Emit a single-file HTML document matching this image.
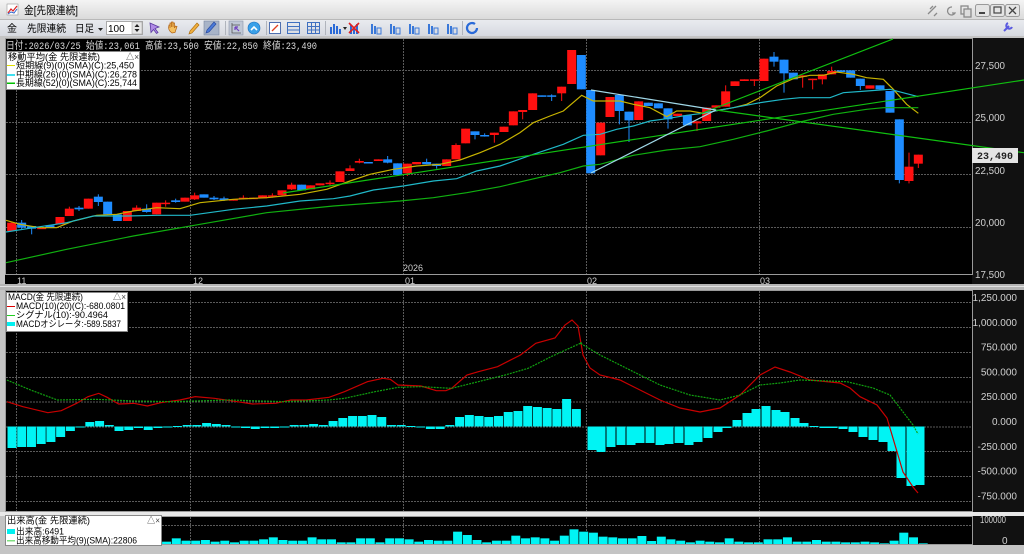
<!DOCTYPE html>
<html><head><meta charset="utf-8">
<style>
html,body{margin:0;padding:0;width:1024px;height:554px;overflow:hidden;background:#c8c8c8}
svg{display:block}
text{font-family:"Liberation Sans","Noto Sans CJK JP",sans-serif}
.m{font-family:"Liberation Mono","Noto Sans CJK JP",monospace}
</style></head><body>
<svg id="s" width="1024" height="554" xmlns="http://www.w3.org/2000/svg">
<defs>
<linearGradient id="tg" x1="0" y1="0" x2="0" y2="1"><stop offset="0" stop-color="#f4f4f4"/><stop offset="1" stop-color="#d9d9d9"/></linearGradient>
<linearGradient id="bg2" x1="0" y1="0" x2="0" y2="1"><stop offset="0" stop-color="#e9ebef"/><stop offset="1" stop-color="#d6d9e0"/></linearGradient>
</defs>
<!-- title bar -->
<rect x="0" y="0" width="1024" height="20" fill="url(#tg)"/>
<rect x="0" y="19" width="1024" height="1" fill="#b8b8b8"/>
<rect x="7" y="4" width="11" height="11" fill="#fff" stroke="#999" stroke-width="0.6"/>
<polyline points="8,13 11,9 13,11 17,6" fill="none" stroke="#d22" stroke-width="1.2"/>
<polyline points="8,14 11,12 14,13 17,9" fill="none" stroke="#36c" stroke-width="1"/>
<text x="24" y="14" font-size="11" fill="#000" textLength="54" lengthAdjust="spacingAndGlyphs">金[先限連続]</text>
<g fill="none" stroke="#8a8a8a" stroke-width="1.3">
<path d="M928,14 l8,-8 M930,9 l3,-3 M934,16 l3,-3"/>
<path d="M952,7 a4,4 0 1 0 3,6 h-3"/>
<rect x="961" y="6" width="7" height="8"/><rect x="964" y="9" width="7" height="8" fill="#ddd"/>
</g>
<g fill="#e4e4e4" stroke="#9a9a9a" stroke-width="1">
<rect x="975.5" y="4.5" width="14" height="12" rx="2"/><rect x="990.5" y="4.5" width="14" height="12" rx="2"/><rect x="1005.5" y="4.5" width="14" height="12" rx="2"/>
</g>
<rect x="979" y="12" width="6" height="2" fill="#444"/>
<rect x="994" y="7" width="7" height="6" fill="none" stroke="#444" stroke-width="1.2"/>
<path d="M1009,7 l7,7 M1016,7 l-7,7" stroke="#444" stroke-width="1.3"/>
<!-- toolbar -->
<rect x="0" y="20" width="1024" height="16" fill="url(#bg2)"/>
<text x="7" y="32" font-size="10" textLength="10" lengthAdjust="spacingAndGlyphs">金</text>
<text x="27" y="32" font-size="10" textLength="39" lengthAdjust="spacingAndGlyphs">先限連続</text>
<text x="75" y="32" font-size="10" textLength="19" lengthAdjust="spacingAndGlyphs">日足</text>
<path d="M98,28 h5 l-2.5,3z" fill="#222"/>
<rect x="106.5" y="21.5" width="36" height="13" fill="#fff" stroke="#aaa"/>
<text x="108" y="32" font-size="10" fill="#000">100</text>
<rect x="132" y="22" width="10" height="12" fill="#e6e6e6" stroke="#999" stroke-width=".5"/>
<path d="M134.5,27 h5 l-2.5,-3z M134.5,29 h5 l-2.5,3z" fill="#222"/>
<!-- tool icons -->
<path d="M150,23 l9,4 -4,1.5 3,4 -1.5,1 -3,-4 -2.5,3z" fill="#b08be6" stroke="#5a3aa0" stroke-width=".8"/>
<path d="M172,33 c-3,-2 -4,-5 -3,-8 l1,0 0,3 0,-5 1.5,0 0,4 0,-5 1.5,0 0,5 0,-4 1.5,0 0,5 1,-2 1.5,0.5 -2,6z" fill="#f4c060" stroke="#b06010" stroke-width=".7"/>
<path d="M189,34 l1,-3 7,-8 2,2 -7,8z" fill="#f0b040" stroke="#b07010" stroke-width=".7"/>
<rect x="204" y="21" width="15" height="14" fill="#a8b4c8" stroke="#7a88a0" stroke-width=".6"/>
<path d="M206,33 l1,-3 7,-8 2,2 -7,8z" fill="#4a7ad8" stroke="#2a4aa0" stroke-width=".7"/>
<rect x="225" y="21" width="1" height="14" fill="#b0b4bc"/>
<rect x="229" y="21" width="14" height="14" fill="#c0c8d6" stroke="#8a94a8" stroke-width=".6"/>
<path d="M232,23 v10 h9 M232,25 h8" stroke="#555" fill="none" stroke-width=".8"/>
<path d="M235,27 l4,4 M235,27 v3 M235,27 h3" stroke="#7040c0" stroke-width="1.2"/>
<circle cx="254" cy="28" r="6" fill="#3aa0e8" stroke="#1a70c0" stroke-width=".6"/>
<path d="M251,30 l3,-3 3,3" stroke="#fff" fill="none" stroke-width="1.6"/>
<rect x="266" y="21" width="1" height="14" fill="#b0b4bc"/>
<rect x="269.5" y="22.5" width="11" height="11" fill="#fff" stroke="#5070b0"/>
<path d="M272,31 l6,-6" stroke="#e04020" stroke-width="1.3"/>
<g stroke="#4070c0" stroke-width="1" fill="none">
<rect x="287.5" y="22.5" width="12" height="11"/><path d="M287.5,26.5 h12 M287.5,30 h12"/>
<rect x="307.5" y="22.5" width="12" height="11"/><path d="M287.5,26.5 h12 M307.5,26.5 h12 M307.5,30 h12 M311.5,22.5 v11 M315.5,22.5 v11"/>
</g>
<rect x="325" y="21" width="1" height="14" fill="#b0b4bc"/>
<g fill="#2a6ad8">
<rect x="330" y="27" width="2" height="7"/><rect x="333" y="24" width="2" height="10"/><rect x="336" y="26" width="2" height="8"/><rect x="339" y="29" width="2" height="5"/>
<rect x="350" y="25" width="2" height="9"/><rect x="353" y="27" width="2" height="7"/><rect x="356" y="24" width="2" height="10"/>
</g>
<path d="M343,27 h4 l-2,3z" fill="#222"/>
<path d="M349,23 l10,10 M359,23 l-10,10" stroke="#e02020" stroke-width="1.6"/>
<g fill="#3a78d8">
<rect x="371" y="24" width="2" height="10"/><rect x="374" y="26" width="2" height="8"/><rect x="377" y="28" width="4" height="6" fill="none" stroke="#3a78d8"/>
<rect x="390" y="24" width="2" height="10"/><rect x="393" y="26" width="2" height="8"/><rect x="396" y="28" width="4" height="6" fill="none" stroke="#3a78d8"/>
<rect x="409" y="24" width="2" height="10"/><rect x="412" y="26" width="2" height="8"/><rect x="415" y="28" width="4" height="6" fill="none" stroke="#3a78d8"/>
<rect x="428" y="24" width="2" height="10"/><rect x="431" y="26" width="2" height="8"/><rect x="434" y="28" width="4" height="6" fill="none" stroke="#3a78d8"/>
<rect x="447" y="24" width="2" height="10"/><rect x="450" y="26" width="2" height="8"/><rect x="453" y="28" width="4" height="6" fill="none" stroke="#3a78d8"/>
</g>
<rect x="462" y="21" width="1" height="14" fill="#b0b4bc"/>
<path d="M475,24 a5,5 0 1 0 2,4" fill="none" stroke="#2a6ad8" stroke-width="2.2"/>
<path d="M1004,31 l5,-5 M1008,23 a3,3 0 1 0 4,4" stroke="#5a5ae0" stroke-width="2" fill="none"/>
<!-- chart backgrounds -->
<rect x="0" y="36" width="1024" height="518" fill="#c4c4c4"/>
<rect x="5" y="38" width="1019" height="247" fill="#000"/>
<rect x="972" y="38" width="52" height="247" fill="#111"/>
<rect x="5" y="290" width="1019" height="222" fill="#000"/>
<rect x="972" y="290" width="52" height="222" fill="#111"/>
<rect x="0" y="512" width="1024" height="4" fill="#e8e8e8"/>
<rect x="5" y="516" width="1019" height="29" fill="#000"/>
<rect x="972" y="516" width="52" height="29" fill="#111"/>
<rect x="0" y="284" width="1024" height="6" fill="#b4b4b4"/>
<rect x="0" y="286" width="1024" height="1" fill="#e0e0e0"/>
<g fill="none" stroke="#9a9a9a" stroke-width="1">
<rect x="5.5" y="38.5" width="967" height="236"/>
<rect x="5.5" y="290.5" width="967" height="221"/>
<rect x="5.5" y="516.5" width="967" height="28"/>
</g>
<g id="grid" stroke="#5a5a5a" stroke-width="1" stroke-dasharray="2,1"></g>
<g id="plot"></g>
<g id="txt" fill="#d0d0d0" font-size="10" class="m"></g>
<!-- legends -->
<g font-size="9" fill="#000">
<rect x="6.5" y="51.5" width="133" height="38" fill="#fff" stroke="#888"/>
<text x="8" y="60" textLength="92" lengthAdjust="spacingAndGlyphs">移動平均(金 先限連続)</text>
<text x="126" y="60" font-size="9" fill="#444" textLength="13" lengthAdjust="spacingAndGlyphs">△×</text>
<rect x="7" y="65" width="8" height="1" fill="#e0e000"/><text x="16" y="68.5" textLength="118" lengthAdjust="spacingAndGlyphs">短期線(9)(0)(SMA)(C):25,450</text>
<rect x="7" y="74" width="8" height="2" fill="#40e0f0"/><text x="16" y="77.5" textLength="121" lengthAdjust="spacingAndGlyphs">中期線(26)(0)(SMA)(C):26,278</text>
<rect x="7" y="82.5" width="8" height="1.5" fill="#00c000"/><text x="16" y="86" textLength="121" lengthAdjust="spacingAndGlyphs">長期線(52)(0)(SMA)(C):25,744</text>

<rect x="6.5" y="292.5" width="121" height="39" fill="#fff" stroke="#888"/>
<text x="8" y="300" textLength="75" lengthAdjust="spacingAndGlyphs">MACD(金 先限連続)</text>
<text x="113" y="300" fill="#444" textLength="13" lengthAdjust="spacingAndGlyphs">△×</text>
<rect x="7" y="306" width="8" height="1" fill="#e00000"/><text x="16" y="309" textLength="109" lengthAdjust="spacingAndGlyphs">MACD(10)(20)(C):-680.0801</text>
<rect x="7" y="315" width="8" height="1" fill="#20d020"/><text x="16" y="318" textLength="92" lengthAdjust="spacingAndGlyphs">シグナル(10):-90.4964</text>
<rect x="7" y="322" width="8" height="4" fill="#00f0f0"/><text x="16" y="327" textLength="105" lengthAdjust="spacingAndGlyphs">MACDオシレータ:-589.5837</text>

<rect x="5.5" y="515.5" width="156" height="30" fill="#fff" stroke="#888"/>
<text x="7" y="523.5" textLength="83" lengthAdjust="spacingAndGlyphs">出来高(金 先限連続)</text>
<text x="147" y="523.5" fill="#444" textLength="13" lengthAdjust="spacingAndGlyphs">△×</text>
<rect x="7" y="529" width="8" height="5" fill="#00f0f0"/><text x="16" y="534.5" textLength="48" lengthAdjust="spacingAndGlyphs">出来高:6491</text>
<rect x="7" y="540" width="8" height="1.5" fill="#80e080"/><text x="16" y="543.5" textLength="121" lengthAdjust="spacingAndGlyphs">出来高移動平均(9)(SMA):22806</text>
</g>
<text x="6" y="49" font-size="10" fill="#d8d8d8" class="m" textLength="311" lengthAdjust="spacingAndGlyphs">日付:2026/03/25 始値:23,061 高値:23,500 安値:22,850 終値:23,490</text>
<rect x="972" y="148" width="46" height="15" fill="#e4e4e4"/>
<text x="977" y="159" font-size="10" font-weight="bold" fill="#222" class="m" textLength="36" lengthAdjust="spacingAndGlyphs">23,490</text>
</svg>
<script>
var NS='http://www.w3.org/2000/svg';
function el(parent,tag,attrs,txt){var e=document.createElementNS(NS,tag);for(var k in attrs)e.setAttribute(k,attrs[k]);if(txt!==undefined)e.textContent=txt;document.getElementById(parent).appendChild(e);return e;}
// grid
[16,190,403,586,759].forEach(function(x){el('grid','line',{x1:x+.5,y1:39,x2:x+.5,y2:274});el('grid','line',{x1:x+.5,y1:291,x2:x+.5,y2:511});el('grid','line',{x1:x+.5,y1:517,x2:x+.5,y2:544});});
[70.5,122.5,174.5,227.5].forEach(function(y){el('grid','line',{x1:6,y1:y,x2:972,y2:y});});
[302,327,352,377,401.5,426.5,451,476,501].forEach(function(y){el('grid','line',{x1:6,y1:y+.5,x2:972,y2:y+.5});});
el('grid','line',{x1:6,y1:525.5,x2:972,y2:525.5});
// candles
var Z5=[[35,'R',560,585],[65,'B',560,575,552,582],[95,'B',570,578,570,595],[125,'R',575,579],[150,'B',568,575],[180,'R',543,565],[208,'R',518,540,512,540],[237,'B',515,520,510,525],[265,'R',488,518],[295,'B',482,498,475,510],[323,'B',497,535],[352,'B',535,555],[382,'R',525,555],[410,'R',515,525,508,525],[440,'B',518,528,505,530],[470,'R',500,535],[497,'R',500,503,493,512],[527,'B',493,498,488,500],[555,'R',485,497],[584,'R',478,490,470,492],[612,'B',475,485],[642,'B',485,490,480,492],[672,'B',487,492,482,495],[700,'R',489,494],[730,'R',485,488,478,490],[760,'R',485,488],[788,'R',478,487],[817,'R',478,482,472,485],[846,'R',463,478],[875,'R',446,460,440,462],[905,'B',446,463],[932,'R',448,460],[960,'R',442,448],[990,'R',440,443,433,448],[1020,'R',406,438],[1050,'R',397,405,388,405],[1078,'R',375,380,368,382],[1105,'B',378,382],[1135,'R',370,375],[1163,'B',370,380,360,382],[1193,'B',382,417],[1222,'R',383,412,383,420],[1250,'R',378,385],[1280,'B',378,385,368,385],[1310,'B',383,390,383,398],[1340,'R',370,390],[1368,'R',327,370,322,370],[1397,'R',278,322],[1425,'B',286,297,286,310],[1454,'B',297,300,292,302],[1483,'R',290,297,290,320]];
var Z6=[[12,'R',272,288],[40,'R',226,268],[68,'R',222,228,222,250],[98,'R',172,222],[126,'B',178,182],[155,'B',178,182,175,195],[185,'R',152,172,152,195],[215,'R',42,144],[244,'B',57,160],[272,'B',162,412],[302,'R',260,358],[330,'R',183,243],[358,'B',177,225,177,265],[387,'B',227,253,227,318],[416,'R',196,252],[445,'B',200,210],[475,'B',202,217],[504,'B',217,250,217,278],[533,'R',233,240],[562,'B',238,268],[591,'R',256,262,256,285],[620,'R',215,255],[648,'R',208,215],[677,'R',166,212,148,212],[705,'R',136,150],[733,'R',130,135],[763,'R',130,133,130,150],[792,'R',68,135],[822,'B',62,77,48,92],[852,'B',71,112,71,170],[880,'B',110,130],[908,'R',118,122,118,155],[938,'R',128,132,128,160],[967,'R',115,130,115,145],[995,'R',105,115,92,115],[1023,'B',103,108],[1052,'B',103,125],[1081,'B',128,150,128,162],[1110,'R',148,158],[1140,'B',148,160],[1170,'B',165,230],[1198,'B',250,432,250,442],[1227,'R',392,435,350,442],[1255,'R',356,383,356,396]];
function cand(arr,ox){arr.forEach(function(c){var x=ox+c[0]/3,bt=36+c[2]/3,bb=36+c[3]/3;var wt=c[4]!==undefined?36+c[4]/3:bt,wb=c[5]!==undefined?36+c[5]/3:bb;var col=c[1]=='R'?'#ff1010':'#1e8cff';
el('plot','line',{x1:x,y1:wt,x2:x,y2:wb,stroke:col,'stroke-width':1});el('plot','rect',{x:x-4.5,y:bt,width:9,height:Math.max(1.5,bb-bt),fill:col});});}
cand(Z5,0);cand(Z6,500);
function pl(pts5,pts6,col,w){var s=[];pts5.forEach(function(p){s.push((p[0]/3)+','+(36+p[1]/3));});pts6.forEach(function(p){s.push((500+p[0]/3)+','+(36+p[1]/3));});el('plot','polyline',{points:s.join(' '),fill:'none',stroke:col,'stroke-width':1.2});}
pl([[18,553],[60,565],[120,575],[170,575],[220,555],[290,538],[350,535],[400,525],[470,515],[540,518],[600,500],[700,490],[800,485],[900,475],[980,460],[1050,435],[1110,415],[1180,400],[1250,390],[1320,385],[1380,372],[1440,350],[1500,325]],[[60,290],[100,260],[150,240],[190,225],[245,178],[280,195],[320,195],[360,195],[400,205],[450,215],[500,242],[530,225],[570,225],[610,232],[660,222],[700,215],[740,205],[780,185],[830,150],[880,128],[930,118],[970,118],[1010,108],[1060,115],[1100,125],[1150,130],[1180,160],[1220,205],[1255,232]],'#c8b400');
pl([[18,588],[100,575],[200,560],[280,540],[380,540],[470,538],[570,538],[700,520],[800,510],[900,495],[1000,488],[1050,480],[1120,462],[1210,450],[1300,435],[1370,428],[1430,405],[1500,390]],[[100,355],[190,325],[250,298],[300,295],[350,280],[400,270],[450,255],[500,248],[560,238],[600,233],[700,215],[780,200],[850,190],[900,185],[990,185],[1030,170],[1100,165],[1170,160],[1255,182]],'#20b8c8');
pl([[18,680],[200,640],[400,600],[600,565],[800,530],[1000,510],[1200,495],[1300,485],[1400,470],[1500,452]],[[180,410],[250,390],[300,385],[400,358],[500,342],[600,332],[700,310],[800,285],[900,258],[1000,235],[1100,220],[1150,215],[1255,215]],'#10b010');
// trend lines
function ln(x1,y1,x2,y2,c){el('plot','line',{x1:x1,y1:y1,x2:x2,y2:y2,stroke:c,'stroke-width':1.2});}
ln(283,193,1024,80,'#10c010');
ln(700,114,893,39,'#10c010');
ln(716,110,1024,152.7,'#10c010');
ln(591,90,716,110,'#a0d8e8');
ln(591,173,716,110,'#a0d8e8');
// MACD bars
var mb=[448,447,447,444,442,437,431,427,422,421,425,431,430,428,430,428,427,426,425,425,423,424,425,427,428,429,428,428,427,425,425,424,425,421,418,416,416,415,417,425,425,426,427,429,429,425,417,415,416,417,416,412,411,406,407,408,409,399,409];
mb.forEach(function(v,i){var x=12+i*9.73;var z=426.5;el('plot','rect',{x:x-4.5,y:Math.min(v,z),width:9,height:Math.max(1,Math.abs(v-z)),fill:'#00f4f4'});});
var mb2=[[592,450],[601,452],[611,447],[621,445],[631,445],[640,443],[650,443],[660,445],[669,444],[679,443],[689,445],[698,442],[708,438],[718,432],[727,428],[737,420],[747,413],[756,409],[766,406],[776,410],[785,412],[795,418],[804,423],[814,426],[824,428],[833,428],[843,429],[853,432],[863,437],[873,440],[883,442],[892,451],[901,478],[911,486],[920,485]];
mb2.forEach(function(b){var z=426.5;el('plot','rect',{x:b[0]-4.5,y:Math.min(b[1],z),width:9,height:Math.max(1,Math.abs(b[1]-z)),fill:'#00f4f4'});});
function pl8(pts,extra,col,dash){var s=[];pts.forEach(function(p){s.push((p[0]/2.613)+','+(340+p[1]/3));});extra.forEach(function(p){s.push(p[0]+','+p[1]);});var a={points:s.join(' '),fill:'none',stroke:col,'stroke-width':1.2};if(dash)a['stroke-dasharray']=dash;el('plot','polyline',a);}
pl8([[18,185],[60,200],[125,218],[160,212],[200,190],[230,170],[258,160],[280,172],[310,192],[350,190],[385,198],[420,188],[470,180],[510,170],[560,175],[620,185],[660,192],[720,190],[760,180],[800,180],[860,172],[900,155],[960,125],[1000,115],[1020,118],[1040,135],[1100,138],[1140,152],[1165,152],[1180,145],[1220,105],[1250,95],[1300,80],[1360,45],[1400,10]],[[555,338],[565,325],[572,320],[578,326],[583,355],[590,368],[600,375],[620,380],[640,390],[660,400],[680,408],[700,412],[720,408],[740,395],[760,375],[775,367],[790,372],[810,380],[840,383],[850,388],[860,396.7],[877,405],[887,418],[895,445],[903,472],[913,487],[918,493]],'#c80000');
pl8([[18,120],[80,150],[150,180],[250,178],[350,183],[450,185],[600,180],[740,185],[860,180],[900,175],[980,155],[1040,142],[1100,140],[1180,145],[1250,125],[1320,105],[1380,85],[1440,50],[1520,8]],[[580,343],[600,355],[630,370],[660,385],[690,395],[720,400],[740,395],[760,385],[780,383],[800,380],[847,381.7],[873,388],[890,395],[900,408],[913,425],[918,434]],'#10a010','2,1');
// volume
var vz=[120,125,125,115,122,122,120,125,122,127,122,122,118,112,120,122,122,112,118,118,127,127,115,115,127,115,115,118,125,120,122,122,95,105,120,127,122,122,107,115,112,115,122,107,88,95,98,110,112,115,115,108,123,110,118,122,127,122,125,127,115,125,127,127,118,118,112,125,125,120,125,125,127,127,125,127,130,122,98,112,130];
var vs=380-24*9.7;
vz.forEach(function(v,i){var x=vs+i*9.7;if(x<160)return;var t=500+v/3;el('plot','rect',{x:x-4.5,y:t,width:9,height:544-t,fill:'#00f4f4'});});
// axis text
var T=[['27,500',69],['25,000',121],['22,500',174],['20,000',226],['17,500',278]];
T.forEach(function(t){el('txt','text',{x:975,y:t[1],textLength:30,lengthAdjust:'spacingAndGlyphs'},t[0]);});
var M=['1,250.000','1,000.000','750.000','500.000','250.000','0.000','-250.000','-500.000','-750.000'];
M.forEach(function(t,i){el('txt','text',{x:1017,y:301+i*24.8,'text-anchor':'end'},t);});
el('txt','text',{x:980,y:523,textLength:26,lengthAdjust:'spacingAndGlyphs'},'100000');
el('txt','text',{x:1002,y:544},'0');
[['11',17],['12',193],['01',405],['02',587],['03',760]].forEach(function(d){el('txt','text',{x:d[1],y:284,'font-size':9},d[0]);});
el('txt','text',{x:403,y:271,'font-size':9},'2026');
</script>
</body></html>
